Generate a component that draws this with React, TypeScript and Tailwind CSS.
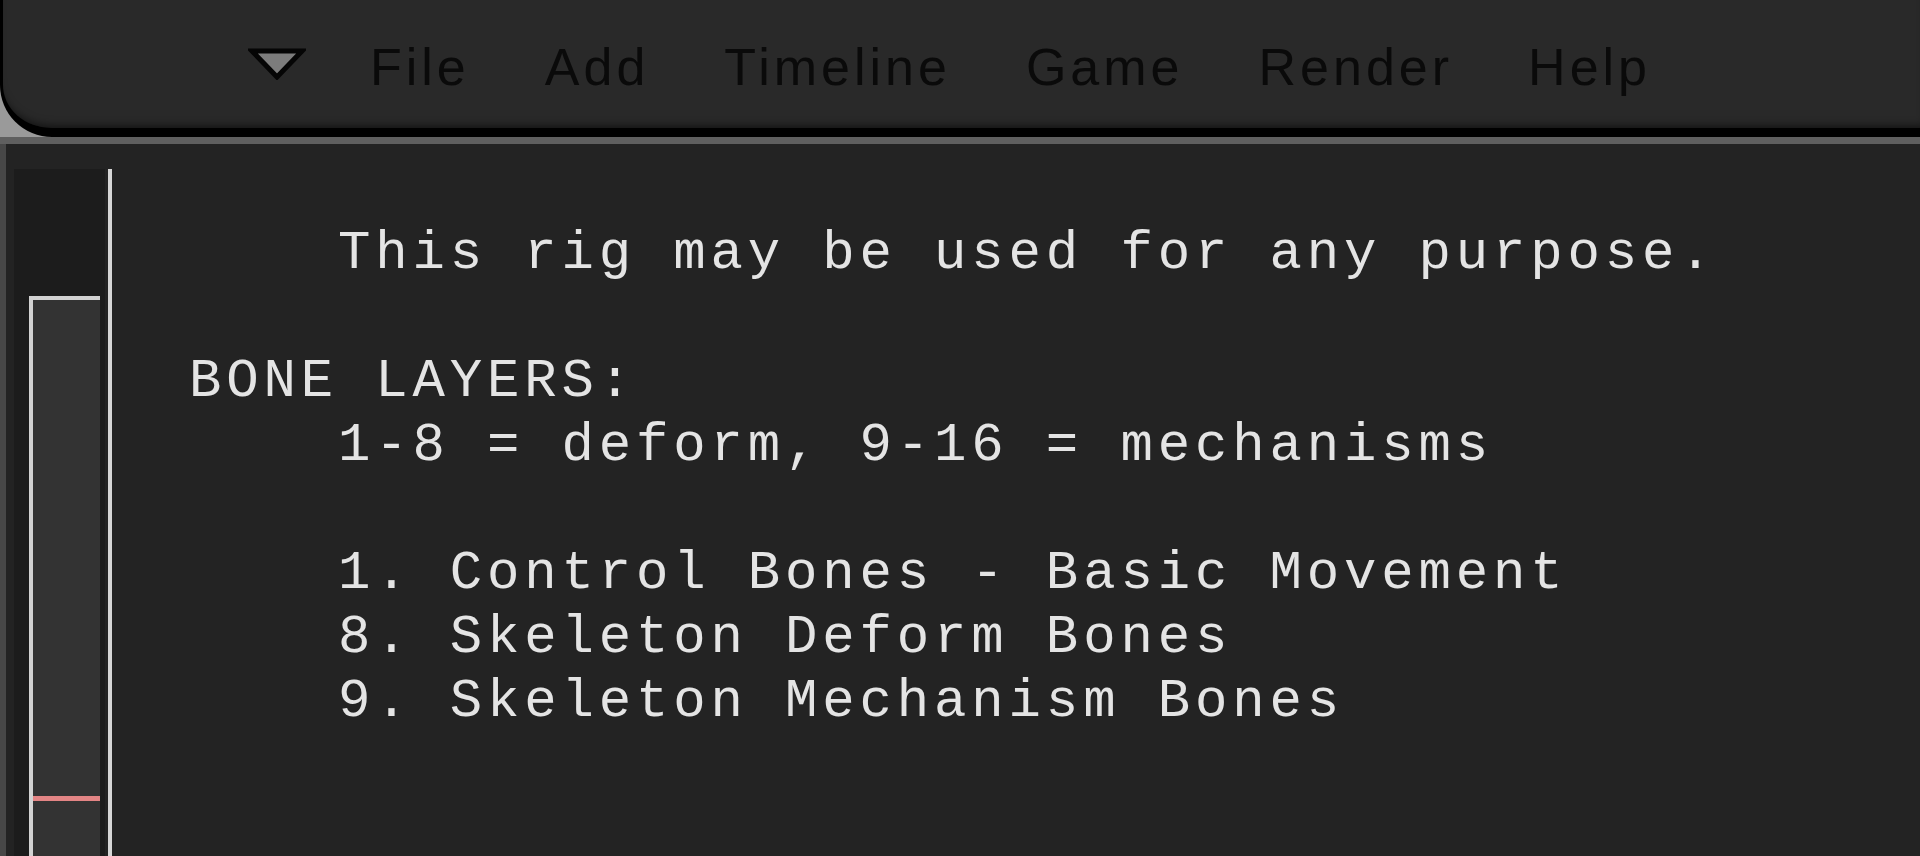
const menuItems = ["File", "Add", "Timeline", "Game", "Render", "Help"];

const noteLines = [
  "    This rig may be used for any purpose.",
  "",
  "BONE LAYERS:",
  "    1-8 = deform, 9-16 = mechanisms",
  "",
  "    1. Control Bones - Basic Movement",
  "    8. Skeleton Deform Bones",
  "    9. Skeleton Mechanism Bones",
];

const MenuArrow = () => (
  <svg width="58" height="32" viewBox="0 0 58 32" className="shrink-0 mt-[7px]">
    <polygon points="4,3 54,3 29,29" fill="#7c7c7c" stroke="#050505" strokeWidth="5" strokeLinejoin="miter" />
  </svg>
);

export default function App() {
  return (
    <div className="h-[856px] w-full overflow-hidden bg-[#232323] flex flex-col">
      {/* header with rounded bottom-left corner */}
      <div className="bg-[#9a9a9a] shrink-0">
        <div className="h-[137px] bg-[#292929] rounded-bl-[52px] border-l-[3px] border-b-[9px] border-black flex items-start pt-[41px] pl-[245px] shadow-[inset_0_-8px_8px_-6px_rgba(0,0,0,0.6)]">
          <MenuArrow />
          <nav className="flex items-start gap-[75px] ml-[64px] font-['Liberation_Sans',Arial,sans-serif] text-[52px] leading-[52px] tracking-[4px] text-[#0a0a0a]">
            {menuItems.map((item) => (
              <span key={item}>{item}</span>
            ))}
          </nav>
        </div>
      </div>
      <div className="h-[7px] bg-[#5f5f5f] shrink-0" />

      {/* body */}
      <div className="flex flex-1 min-h-0">
        <div className="w-[6px] bg-[#474747] shrink-0" />
        <div className="w-[8px] shrink-0" />
        {/* scroll column */}
        <div className="w-[91px] shrink-0 mt-[25px] bg-[#1c1c1c] flex flex-col">
          <div className="h-[127px]" />
          <div className="flex-1 ml-[15px] mr-[5px] bg-[#333333] border-l-[4px] border-t-[4px] border-[#d2d2d2] flex flex-col">
            <div className="h-[496px]" />
            <div className="h-[5px] bg-[#e38585]" />
          </div>
        </div>
        <div className="w-[3px] shrink-0" />
        <div className="w-[4px] shrink-0 mt-[25px] bg-[#d6d6d6]" />

        {/* text area */}
        <div className="flex-1 pl-[77px] pt-[78px]">
          <pre className="font-['Liberation_Mono','DejaVu_Sans_Mono',monospace] text-[54px] leading-[64px] tracking-[4.85px] text-[#e4e4e4] whitespace-pre">
            {noteLines.join("\n")}
          </pre>
        </div>
      </div>
    </div>
  );
}
